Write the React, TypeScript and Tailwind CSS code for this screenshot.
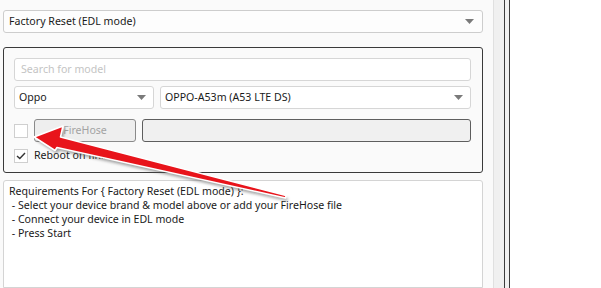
import React from "react";

const font = { fontFamily: '"Noto Sans", "Open Sans", sans-serif' };

function Caret() {
  return (
    <svg width="9" height="5" viewBox="0 0 9 5" className="shrink-0">
      <polygon points="0,0 9,0 4.5,5" fill="#7a7a7a" />
    </svg>
  );
}

function Check({ checked }: { checked?: boolean }) {
  return (
    <div className="w-[14px] h-[14px] border border-[#cfcfcf] bg-white flex items-center justify-center shrink-0">
      {checked && (
        <svg width="10" height="8" viewBox="0 0 10 8">
          <polyline points="1,4 3.8,6.6 9,1" fill="none" stroke="#333" strokeWidth="1.4" />
        </svg>
      )}
    </div>
  );
}

const ARROW = "34,137 63,126 60.5,137 286,195.5 285.5,198 57,147.5 55,150.5";

export default function App() {
  return (
    <div
      className="relative w-[601px] h-[288px] overflow-hidden flex bg-white text-[10.6px] text-[#1a1a1a]"
      style={font}
    >
      {/* left panel */}
      <div className="w-[493px] h-full bg-[#fafafa] pl-[3px] pr-[10px] pt-[10px] flex flex-col shrink-0">
        <div className="h-[23px] border border-[#cdcdcd] rounded-[3px] bg-[#fdfdfd] flex items-center justify-between pl-[5px] pr-[8px]">
          <span>Factory Reset (EDL mode)</span>
          <Caret />
        </div>

        <div className="mt-[14px] h-[126px] border border-[#3a3a3a] rounded-[3px] pl-[10px] pr-[11px] pt-[10px] flex flex-col">
          <div className="h-[23px] border border-[#d6d6d6] rounded-[3px] bg-white flex items-center pl-[6px] text-[#c4c4c4]">
            Search for model
          </div>
          <div className="mt-[5px] h-[23px] flex gap-[6px]">
            <div className="w-[140px] border border-[#d6d6d6] rounded-[3px] bg-white flex items-center justify-between pl-[4px] pr-[7px]">
              <span>Oppo</span>
              <Caret />
            </div>
            <div className="flex-1 border border-[#d6d6d6] rounded-[3px] bg-white flex items-center justify-between pl-[4px] pr-[7px]">
              <span>OPPO-A53m (A53 LTE DS)</span>
              <Caret />
            </div>
          </div>
          <div className="mt-[10px] h-[23px] flex items-center">
            <Check />
            <div className="ml-[6px] w-[102px] h-[23px] border border-[#8a8a8a] rounded-[3px] bg-[#eeeeee] flex items-center justify-center text-[#a3a3a3]">
              FireHose
            </div>
            <div className="ml-[6px] flex-1 h-[23px] border border-[#5e5e5e] rounded-[3px] bg-[#f0f0f0]" />
          </div>
          <div className="mt-[6px] h-[16px] flex items-center">
            <Check checked />
            <span className="ml-[6px]">Reboot on finish</span>
          </div>
        </div>

        <div className="mt-[7px] flex-1 border border-[#d4d4d4] rounded-t-[3px] bg-white pl-[5px] pt-[3px] leading-[14px] whitespace-pre">
          <div>Requirements For {"{"} Factory Reset (EDL mode) {"}"}:</div>
          <div> - Select your device brand &amp; model above or add your FireHose file</div>
          <div> - Connect your device in EDL mode</div>
          <div> - Press Start</div>
        </div>
      </div>

      {/* splitter */}
      <div className="w-[11px] h-full bg-[#f0f0f0] border-l border-[#e0e0e0] shrink-0" />
      <div className="w-[1px] h-full bg-[#3c3c3c] shrink-0" />
      <div className="w-[4px] h-full bg-[#f0f0f0] shrink-0" />
      <div className="w-[1px] h-full bg-[#3c3c3c] shrink-0" />
      <div className="flex-1 h-full bg-white" />

      {/* annotation arrow */}
      <svg className="absolute left-0 top-0 pointer-events-none" width="601" height="288">
        <defs>
          <filter id="sh" x="-20%" y="-20%" width="140%" height="140%">
            <feGaussianBlur stdDeviation="1.6" />
          </filter>
        </defs>
        <polygon points={ARROW} fill="#555" opacity="0.55" filter="url(#sh)" transform="translate(2,3)" />
        <polygon points={ARROW} fill="#e8141b" stroke="#ffffff" strokeWidth="1.6" strokeLinejoin="round" />
      </svg>
    </div>
  );
}
